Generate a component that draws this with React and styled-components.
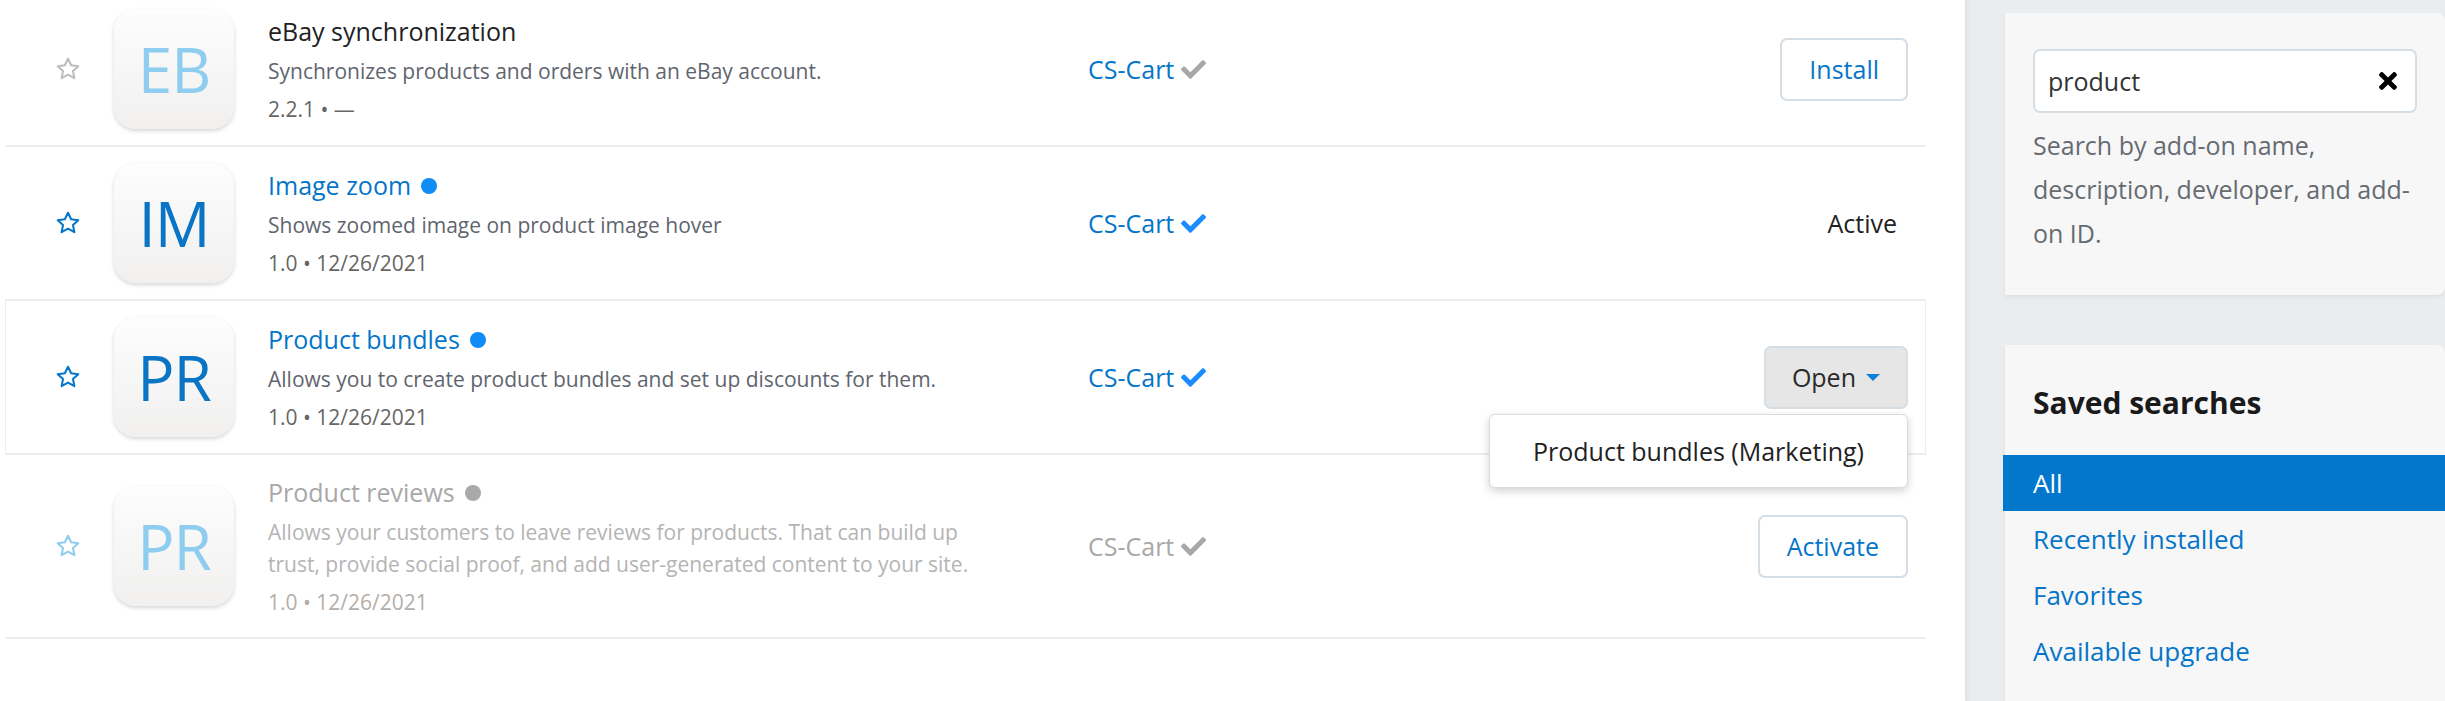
import React from "react";
import styled, { createGlobalStyle } from "styled-components";
import { FaCheck, FaTimes } from "react-icons/fa";

const GlobalStyle = createGlobalStyle`
    body {
        margin: 0;
        background: #ffffff;
        font-family: "Open Sans", "Noto Sans", sans-serif;
        overflow: hidden;
    }
`;

const Page = styled.div`
    display: flex;
    height: 701px;
    overflow: hidden;
`;

const Main = styled.div`
    flex: 1;
    padding: 0 39px 0 5px;
    background: #ffffff;
`;

// list is scrolled a little, so the first row is cut at the top
const List = styled.div`
    margin-top: -7px;
`;

const Row = styled.div`
    display: grid;
    grid-template-columns: 25px 120px 786px 1fr auto;
    column-gap: 34px;
    align-items: center;
    min-height: 154px;
    box-sizing: border-box;
    padding: 16px 17px 16px 49px;
    border-bottom: 2px solid #ededed;
    border-left: 1px solid ${(p) => (p.$hover ? "#eaeef1" : "transparent")};
    border-right: 1px solid ${(p) => (p.$hover ? "#eaeef1" : "transparent")};
    position: relative;
    z-index: ${(p) => (p.$hover ? 2 : 1)};
`;

const Star = styled.svg`
    width: 26px;
    height: 26px;
    color: ${(p) => p.$color};
`;

const Logo = styled.div`
    width: 120px;
    height: 120px;
    border-radius: 22px;
    background: linear-gradient(#fdfdfd, #f1f0ef);
    box-shadow: 0 2px 4px rgba(0, 0, 0, 0.16), 0 0 1px rgba(0, 0, 0, 0.06);
    display: flex;
    align-items: center;
    justify-content: center;
    font-size: 62px;
    font-weight: 400;
    letter-spacing: -1px;
    color: ${(p) => p.$color};
`;

const Info = styled.div`
    display: flex;
    flex-direction: column;
    gap: 6px;
    padding: 3px 0;
`;

const Title = styled.div`
    display: flex;
    align-items: center;
    gap: 10px;
    font-size: 25px;
    line-height: 36px;
    color: ${(p) => p.$color};
`;

const Dot = styled.span`
    width: 16px;
    height: 16px;
    border-radius: 50%;
    background: ${(p) => p.$color};
    margin-top: 2px;
`;

const Desc = styled.div`
    max-width: 720px;
    font-size: 21px;
    line-height: 32px;
    color: ${(p) => p.$color};
`;

const Meta = styled(Desc)``;

const Developer = styled.div`
    display: flex;
    align-items: center;
    gap: 7px;
    font-size: 25px;
    color: ${(p) => p.$color};

    svg {
        color: ${(p) => p.$check};
        font-size: 25px;
    }
`;

const Action = styled.div`
    position: relative;
    display: flex;
    justify-content: flex-end;
`;

const Button = styled.div`
    box-sizing: border-box;
    height: 63px;
    padding: 0 ${(p) => (p.$gray ? "26px" : "27px")};
    display: flex;
    align-items: center;
    gap: 10px;
    border: 2px solid #d5dde5;
    border-radius: 7px;
    background: ${(p) => (p.$gray ? "#e6e6e6" : "#ffffff")};
    color: ${(p) => (p.$gray ? "#2a2a2a" : "#0575c9")};
    font-size: 25px;
`;

const Caret = styled.span`
    width: 0;
    height: 0;
    border-left: 7px solid transparent;
    border-right: 7px solid transparent;
    border-top: 7px solid #0a80d8;
`;

const ActiveLabel = styled.div`
    margin-right: 11px;
    font-size: 25px;
    color: #222222;
`;

const Dropdown = styled.div`
    position: absolute;
    top: calc(100% + 5px);
    right: 0;
    box-sizing: border-box;
    width: 419px;
    height: 74px;
    display: flex;
    align-items: center;
    justify-content: center;
    background: #ffffff;
    border: 1px solid #dcdcdc;
    border-radius: 6px;
    box-shadow: 0 3px 8px rgba(0, 0, 0, 0.18);
    font-size: 25px;
    color: #222222;
    white-space: nowrap;
`;

const Aside = styled.aside`
    width: 480px;
    box-sizing: border-box;
    padding: 13px 0 0 40px;
    background: #eaedf0;
    box-shadow: inset 6px 0 6px -4px rgba(0, 0, 0, 0.06);
`;

const Panel = styled.div`
    background: #f7f7f7;
    border-radius: 0 8px 8px 0;
    box-shadow: 0 2px 4px rgba(0, 0, 0, 0.06);
    padding: ${(p) => p.$pad};
    margin-top: ${(p) => p.$top || 0};
    min-height: ${(p) => p.$minHeight || "auto"};
`;

const SearchBox = styled.div`
    box-sizing: border-box;
    height: 64px;
    display: flex;
    align-items: center;
    justify-content: space-between;
    padding: 0 14px 0 13px;
    background: #ffffff;
    border: 2px solid #d5dde5;
    border-radius: 7px;
    font-size: 25px;
    color: #333333;

    svg {
        color: #000000;
        font-size: 26px;
    }
`;

const Hint = styled.div`
    margin-top: 10px;
    font-size: 25px;
    line-height: 44px;
    color: #666b72;
`;

const PanelTitle = styled.div`
    font-size: 30px;
    font-weight: 700;
    line-height: 40px;
    color: #1a1a1a;
    padding: 0 28px;
    margin-bottom: 32px;
`;

const SavedItem = styled.div`
    height: 56px;
    display: flex;
    align-items: center;
    margin-left: ${(p) => (p.$active ? "-2px" : 0)};
    padding-left: ${(p) => (p.$active ? "30px" : "28px")};
    font-size: 26px;
    background: ${(p) => (p.$active ? "#0277cc" : "transparent")};
    color: ${(p) => (p.$active ? "#ffffff" : "#0575c9")};
`;

const StarIcon = ({ color }) => (
    <Star $color={color} viewBox="0 0 24 24">
        <polygon
            points="12,2.5 14.9,8.6 21.5,9.4 16.6,13.9 17.9,20.5 12,17.2 6.1,20.5 7.4,13.9 2.5,9.4 9.1,8.6"
            fill="none"
            stroke="currentColor"
            strokeWidth="1.9"
            strokeLinejoin="round"
        />
    </Star>
);

const addons = [
    {
        code: "EB",
        title: "eBay synchronization",
        desc: "Synchronizes products and orders with an eBay account.",
        meta: "2.2.1 • —",
        star: "#bdbdbd",
        logo: "#8ecdf0",
        titleColor: "#222222",
        descColor: "#5f656e",
        metaColor: "#666666",
        devColor: "#0575c9",
        check: "#a8a8a8",
        action: "install",
    },
    {
        code: "IM",
        title: "Image zoom",
        dot: "#0f8cf5",
        desc: "Shows zoomed image on product image hover",
        meta: "1.0 • 12/26/2021",
        star: "#0477cc",
        logo: "#0a74c5",
        titleColor: "#0575c9",
        descColor: "#5f656e",
        metaColor: "#666666",
        devColor: "#0575c9",
        check: "#1a8cff",
        action: "active",
    },
    {
        code: "PR",
        title: "Product bundles",
        dot: "#0f8cf5",
        desc: "Allows you to create product bundles and set up discounts for them.",
        meta: "1.0 • 12/26/2021",
        star: "#0477cc",
        logo: "#0a74c5",
        titleColor: "#0575c9",
        descColor: "#5f656e",
        metaColor: "#666666",
        devColor: "#0575c9",
        check: "#1a8cff",
        action: "open",
        hover: true,
    },
    {
        code: "PR",
        title: "Product reviews",
        dot: "#a9a9a9",
        desc: "Allows your customers to leave reviews for products. That can build up trust, provide social proof, and add user-generated content to your site.",
        meta: "1.0 • 12/26/2021",
        star: "#8ecdf0",
        logo: "#8ecdf0",
        titleColor: "#a8a8a8",
        descColor: "#b4b4b4",
        metaColor: "#b5aea9",
        devColor: "#a8a8a8",
        check: "#a8a8a8",
        action: "activate",
    },
];

function AddonAction({ type }) {
    if (type === "install") return <Button>Install</Button>;
    if (type === "activate") return <Button>Activate</Button>;
    if (type === "active") return <ActiveLabel>Active</ActiveLabel>;
    return (
        <>
            <Button $gray>
                Open <Caret />
            </Button>
            <Dropdown>Product bundles (Marketing)</Dropdown>
        </>
    );
}

function App() {
    return (
        <>
            <GlobalStyle />
            <Page>
                <Main>
                    <List>
                        {addons.map((a) => (
                            <Row key={a.title} $hover={a.hover}>
                                <StarIcon color={a.star} />
                                <Logo $color={a.logo}>{a.code}</Logo>
                                <Info>
                                    <Title $color={a.titleColor}>
                                        {a.title}
                                        {a.dot && <Dot $color={a.dot} />}
                                    </Title>
                                    <Desc $color={a.descColor}>{a.desc}</Desc>
                                    <Meta $color={a.metaColor}>{a.meta}</Meta>
                                </Info>
                                <Developer $color={a.devColor} $check={a.check}>
                                    CS-Cart <FaCheck />
                                </Developer>
                                <Action>
                                    <AddonAction type={a.action} />
                                </Action>
                            </Row>
                        ))}
                    </List>
                </Main>
                <Aside>
                    <Panel $pad="36px 28px 40px 28px">
                        <SearchBox>
                            product
                            <FaTimes />
                        </SearchBox>
                        <Hint>
                            Search by add-on name, description, developer, and
                            add-on ID.
                        </Hint>
                    </Panel>
                    <Panel $pad="38px 0 0 0" $top="50px" $minHeight="400px">
                        <PanelTitle>Saved searches</PanelTitle>
                        <SavedItem $active>All</SavedItem>
                        <SavedItem>Recently installed</SavedItem>
                        <SavedItem>Favorites</SavedItem>
                        <SavedItem>Available upgrade</SavedItem>
                    </Panel>
                </Aside>
            </Page>
        </>
    );
}

export default App;
